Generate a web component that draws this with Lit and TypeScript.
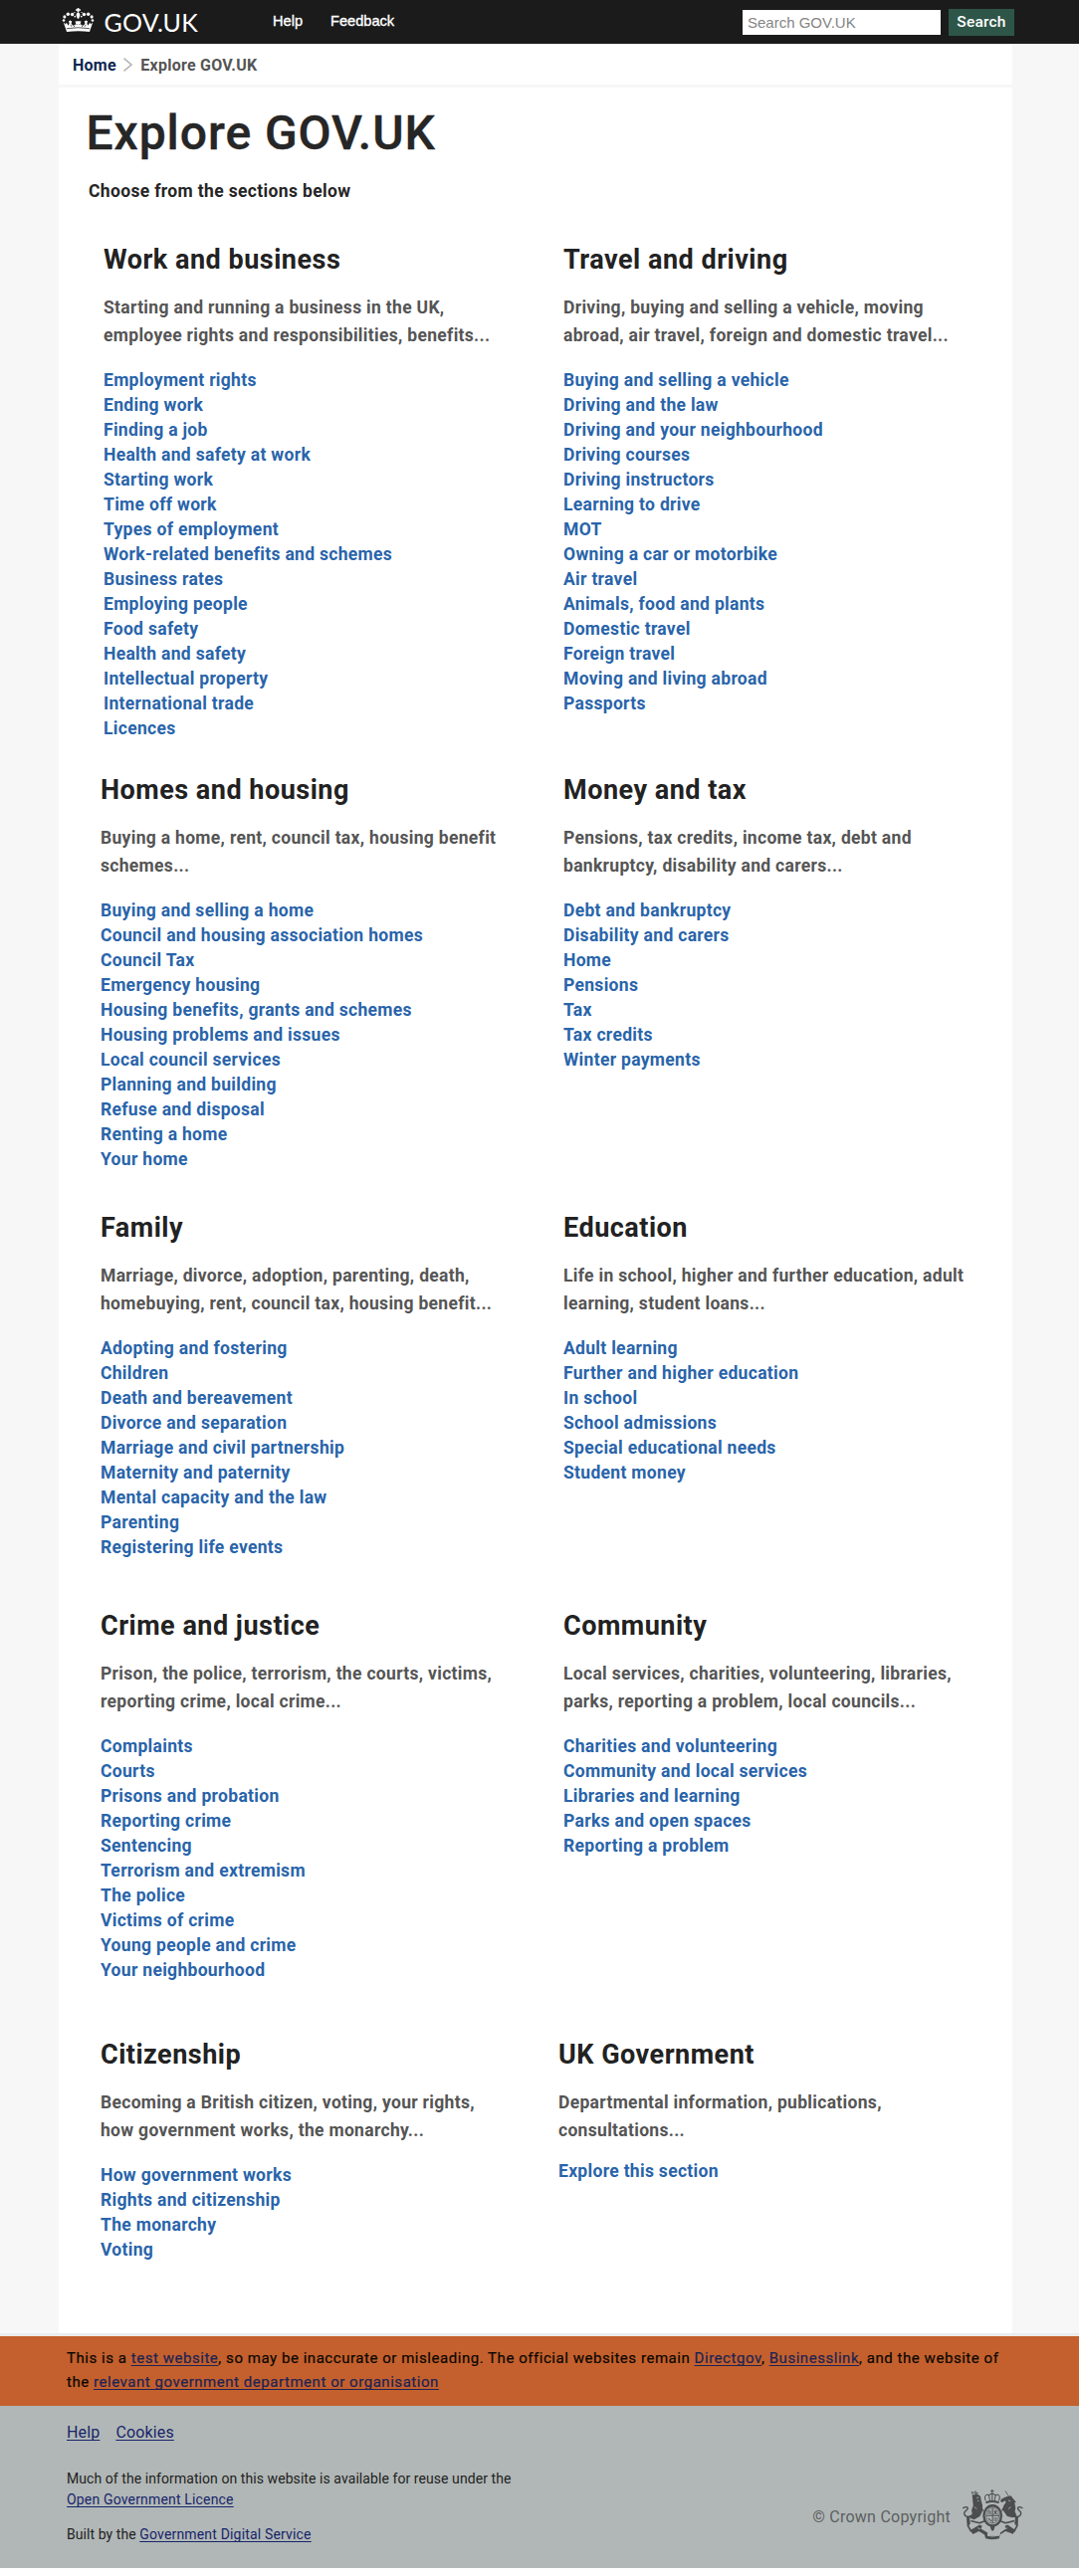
import { LitElement, html, svg, css } from "lit";
import { customElement, property } from "lit/decorators.js";
import { classMap } from "lit/directives/class-map.js";

interface Section {
  title: string;
  summary: string[];
  links: string[];
  compact?: boolean;
}

const SECTIONS: Section[] = [
  {
    title: "Work and business",
    summary: ["Starting and running a business in the UK,", "employee rights and responsibilities, benefits..."],
    links: ["Employment rights", "Ending work", "Finding a job", "Health and safety at work", "Starting work", "Time off work", "Types of employment", "Work-related benefits and schemes", "Business rates", "Employing people", "Food safety", "Health and safety", "Intellectual property", "International trade", "Licences"],
  },
  {
    title: "Travel and driving",
    summary: ["Driving, buying and selling a vehicle, moving", "abroad, air travel, foreign and domestic travel..."],
    links: ["Buying and selling a vehicle", "Driving and the law", "Driving and your neighbourhood", "Driving courses", "Driving instructors", "Learning to drive", "MOT", "Owning a car or motorbike", "Air travel", "Animals, food and plants", "Domestic travel", "Foreign travel", "Moving and living abroad", "Passports"],
  },
  {
    title: "Homes and housing",
    summary: ["Buying a home, rent, council tax, housing benefit", "schemes..."],
    links: ["Buying and selling a home", "Council and housing association homes", "Council Tax", "Emergency housing", "Housing benefits, grants and schemes", "Housing problems and issues", "Local council services", "Planning and building", "Refuse and disposal", "Renting a home", "Your home"],
  },
  {
    title: "Money and tax",
    summary: ["Pensions, tax credits, income tax, debt and", "bankruptcy, disability and carers..."],
    links: ["Debt and bankruptcy", "Disability and carers", "Home", "Pensions", "Tax", "Tax credits", "Winter payments"],
  },
  {
    title: "Family",
    summary: ["Marriage, divorce, adoption, parenting, death,", "homebuying, rent, council tax, housing benefit..."],
    links: ["Adopting and fostering", "Children", "Death and bereavement", "Divorce and separation", "Marriage and civil partnership", "Maternity and paternity", "Mental capacity and the law", "Parenting", "Registering life events"],
  },
  {
    title: "Education",
    summary: ["Life in school, higher and further education, adult", "learning, student loans..."],
    links: ["Adult learning", "Further and higher education", "In school", "School admissions", "Special educational needs", "Student money"],
  },
  {
    title: "Crime and justice",
    summary: ["Prison, the police, terrorism, the courts, victims,", "reporting crime, local crime..."],
    links: ["Complaints", "Courts", "Prisons and probation", "Reporting crime", "Sentencing", "Terrorism and extremism", "The police", "Victims of crime", "Young people and crime", "Your neighbourhood"],
  },
  {
    title: "Community",
    summary: ["Local services, charities, volunteering, libraries,", "parks, reporting a problem, local councils..."],
    links: ["Charities and volunteering", "Community and local services", "Libraries and learning", "Parks and open spaces", "Reporting a problem"],
  },
  {
    title: "Citizenship",
    summary: ["Becoming a British citizen, voting, your rights,", "how government works, the monarchy..."],
    links: ["How government works", "Rights and citizenship", "The monarchy", "Voting"],
  },
  {
    title: "UK Government",
    summary: ["Departmental information, publications,", "consultations..."],
    links: ["Explore this section"],
    compact: true,
  },
];

const crown = html`<svg class="crown" viewBox="36 24 98 73" aria-hidden="true">
  <g fill="#fff">
    <path d="M82 24h6l-1 4 5-1v6l-5-1 1 5h-6l1-5-5 1v-6l5 1z" />
    <path d="M85 37c5 3 7 7 5 12l-3 8h-4l-3-8c-2-5 0-9 5-12z" />
    ${[
      [41, 62, 4], [43.5, 51, 4.6], [54, 43, 5.2], [67, 44, 5.2], [74, 38, 2],
      [129, 62, 4], [126.5, 51, 4.6], [116, 43, 5.2], [103, 44, 5.2], [96, 38, 2],
      [75, 50, 2.6], [95, 50, 2.6],
    ].map(([x, y, r]) => svg`<circle cx=${x} cy=${y} r=${r} />`)}
    <path d="M40 68l7 6 2-6 6 10 3-7-2-7 5-2 5 3-2 7 5 6 7-2 2-7-3-3 5-2h10l5 2-3 3 2 7 7 2 5-6-2-7 5-3 5 2-2 7 3 7 6-10 2 6 7-6-8 22-2 7q-33-5-70 0l-2-7z" />
  </g>
  <g fill="none" stroke="#1b1b1b" stroke-width="2.2">
    <path d="M50 87q35-6 70 0" />
    <path d="M62 75l3 6M74 78l-2 4M108 75l-3 6M96 78l2 4M79 72l3 4M91 72l-3 4" />
  </g>
</svg>`;

const crest = html`<svg class="crest" viewBox="51 38 182 151" aria-hidden="true">
  <g fill="none" stroke="#4b4d4e" stroke-linecap="round" stroke-linejoin="round">
    <path stroke-width="3" d="M140 38v12M136 43h8M120 70c-6-14 4-20 10-15 5-7 15-7 20 0 6-5 17 1 10 15M130 55l3 16M150 55l-3 16M140 50v20" />
    <path stroke-width="6" d="M123 76q17-5 35 0" />
    <ellipse stroke-width="7" cx="141" cy="116" rx="26" ry="30" />
    <ellipse stroke-width="2" cx="141" cy="116" rx="19" ry="23" />
    <path stroke-width="3" d="M141 95v42M124 116h34M128 103h8M128 109h9M146 102l7 9M146 111l6-9M129 124l8 8M146 124h8M146 130h6" />
    <path stroke-width="4" d="M86 117c-14 4-28 4-30-7-2-9 14-10 10-18-3-5-9-1-13 1" />
    <path stroke-width="4" d="M196 117c14 4 28 4 30-7 2-9-12-10-9-18 3-5 9-1 13 1" />
    <path stroke-width="2.4" d="M180 43l10 16M79 46l3 8M90 42v10M79 46l18 2" />
    <path stroke-width="5" d="M92 108l-22 12-3 26 9 16M78 132l24 6 16-6M190 108l22 12 3 26-9 16M204 132l-24 6-16-6" />
    <path stroke-width="4" d="M112 100l-8-12M170 100l8-12" />
  </g>
  <g fill="#4b4d4e">
    <path d="M80 55l14-5 11 8 2 14 4 14-1 18-7 14-17 10-12-4 6-14-2-10 5-14z" />
    <path d="M187 58l9-2 6 8 10 12-5 1 3 16-2 10 5 13-12 6-16-4-14-20 3-12 7-10-2-5-9 5-6-3 4-7 13-6z" />
    <path d="M74 160l28-17 8 4-4 8 20 12v10h38v-10l17-12-3-8 8-4 24 17-8 11-22-8-17 10-2 11q-21 6-41 0l-3-11-17-10-18 9z" />
    <path d="M134 150l7-5 7 5-3 8-4 5-4-5z" />
    <path d="M63 120h9l2 20-5 6-5-8zM218 120h-9l-2 20 5 6 5-8z" />
  </g>
  <g fill="none" stroke="#b1b7b6" stroke-width="2.4">
    <path d="M93 62h7M95 70l6 3M127 168v8q14 4 28 0v-8M96 153l8 3M186 153l-8 3M86 90l8 6M196 90l-8 6M188 70l7 3" />
  </g>
</svg>`;

@customElement("topic-section")
export class TopicSection extends LitElement {
  @property({ attribute: false }) section!: Section;

  static styles = css`
    :host { display: block; font-size: 17.5px; letter-spacing: 0.31px; font-weight: 700; }
    .title { margin: 0; font-size: 27px; line-height: 30px; letter-spacing: 0.5px; color: #222; }
    .summary { margin: 19px 0; line-height: 28px; color: #555; white-space: nowrap; }
    .links { list-style: none; margin: 0; padding: 0; line-height: 25px; }
    .compact { margin-top: -4px; }
    .link { color: #2964aa; text-decoration: none; }
  `;

  render() {
    const { title, summary, links, compact } = this.section;
    return html`
      <h2 class="title">${title}</h2>
      <p class="summary">${summary[0]}<br />${summary[1]}</p>
      <ul class=${classMap({ links: true, compact: !!compact })}>
        ${links.map((l) => html`<li><a class="link" href="#">${l}</a></li>`)}
      </ul>
    `;
  }
}

@customElement("app-root")
export class AppRoot extends LitElement {
  static styles = css`
    :host { display: block; height: 2589px; background: #fff; font-family: Roboto, "Liberation Sans", sans-serif; }
    * { box-sizing: border-box; }
    .header { height: 44px; padding: 0 65px 0 62px; background: #1b1b1b; display: flex; align-items: flex-start; }
    .logo { display: flex; width: 212px; padding-top: 8px; gap: 9.5px; color: #fff; }
    .crown { width: 33px; height: 24px; display: block; }
    .wordmark { font: 400 25px/29px Lato, sans-serif; letter-spacing: 0.2px; }
    .nav { display: flex; gap: 28px; flex: 1; padding-top: 11px; font: 14.6px/20px "Liberation Sans", sans-serif; }
    .nav a { color: #fff; text-decoration: none; -webkit-text-stroke: 0.35px #fff; }
    .search { display: flex; gap: 8px; padding-top: 9px; }
    .field { width: 199px; height: 25px; margin-top: 1px; padding: 0 5px; border: 0; border-radius: 0; background: #fff; font: 15px "Liberation Sans", sans-serif; }
    .field::placeholder { color: #858585; opacity: 1; }
    .go { width: 66px; height: 27px; border: 0; padding: 0 0 1px; background: #2e5648; color: #fff; font: 500 15.5px Roboto, sans-serif; letter-spacing: 0.2px; }
    .body { background: #f7f7f7; height: 2301px; }
    .page { width: 958px; height: 2301px; margin-left: 59px; background: #fff; }
    .crumbs { height: 44px; padding: 1px 0 0 14px; border-bottom: 3px solid #f7f7f7; display: flex; align-items: center; font-size: 16px; font-weight: 700; letter-spacing: 0.25px; color: #555; }
    .crumbs a { color: #0b2551; text-decoration: none; }
    .chevron { width: 9px; height: 14px; margin: 0 8px 0 7.5px; }
    .heading { margin: 18px 0 0 27.5px; font-size: 48px; line-height: 56px; font-weight: 500; letter-spacing: 0.95px; -webkit-text-stroke: 0.4px #262626; color: #262626; }
    .lead { margin: 18px 0 41px 30px; font-size: 17.5px; line-height: 25px; letter-spacing: 0.35px; font-weight: 700; color: #262626; }
    .topics { display: grid; grid-template-columns: 465px 1fr; grid-template-rows: 533px 440px 400px 431px auto; padding-left: 42px; }
    .first { padding-left: 3px; }
    .last { margin-left: -5px; }
    .notice { height: 73px; padding: 10px 67px; border-top: 3px solid #ebebeb; background: #c3602d; color: #0b0600; font-size: 15px; line-height: 24px; letter-spacing: 0.54px; white-space: nowrap; }
    .notice p { margin: 0; -webkit-text-stroke: 0.2px; }
    .notice a, .footer a { color: #17256b; text-decoration: underline 1px; text-underline-offset: 1.5px; text-decoration-skip-ink: none; }
    .notice a { color: #1d2353; }
    .footer { height: 163px; padding: 15px 56px 0 67px; background: #b1b7b6; color: #222; display: flex; justify-content: space-between; }
    .links { display: flex; gap: 16px; font-size: 16px; line-height: 24px; letter-spacing: 0.15px; }
    .small { margin: 24px 0 0; font-size: 14px; line-height: 21px; letter-spacing: 0.07px; }
    .small a { letter-spacing: 0.17px; }
    .small + .small { margin-top: 14px; }
    .copyright { display: flex; align-items: center; gap: 12px; height: 51px; margin-top: 69px; font-size: 16px; letter-spacing: 0.25px; color: #5c6061; }
    .copyright span { padding-top: 3px; }
    .crest { width: 61px; height: 51px; display: block; }
  `;

  render() {
    return html`
      <header class="header">
        <div class="logo">${crown}<span class="wordmark">GOV.UK</span></div>
        <nav class="nav"><a href="#">Help</a><a href="#">Feedback</a></nav>
        <div class="search">
          <input class="field" placeholder="Search GOV.UK" />
          <button class="go">Search</button>
        </div>
      </header>
      <div class="body">
        <main class="page">
          <div class="crumbs">
            <a href="#">Home</a>
            <svg class="chevron" viewBox="0 0 9 14"><path d="M.5 .7L8 7 .5 13.3" fill="none" stroke="#b4b4b4" stroke-width="1.6" /></svg>
            <span>Explore GOV.UK</span>
          </div>
          <h1 class="heading">Explore GOV.UK</h1>
          <p class="lead">Choose from the sections below</p>
          <div class="topics">
            ${SECTIONS.map(
              (s, i) => html`<topic-section
                class=${classMap({ first: i === 0, last: i === SECTIONS.length - 1 })}
                .section=${s}
              ></topic-section>`
            )}
          </div>
        </main>
      </div>
      <div class="notice">
        <p>This is a <a href="#">test website</a>, so may be inaccurate or misleading. The official websites remain <a href="#">Directgov</a>, <a href="#">Businesslink</a>, and the website of<br />the <a href="#">relevant government department or organisation</a></p>
      </div>
      <footer class="footer">
        <div>
          <div class="links"><a href="#">Help</a><a href="#">Cookies</a></div>
          <p class="small">Much of the information on this website is available for reuse under the<br /><a href="#">Open Government Licence</a></p>
          <p class="small">Built by the <a href="#">Government Digital Service</a></p>
        </div>
        <div class="copyright"><span>© Crown Copyright</span>${crest}</div>
      </footer>
    `;
  }
}
